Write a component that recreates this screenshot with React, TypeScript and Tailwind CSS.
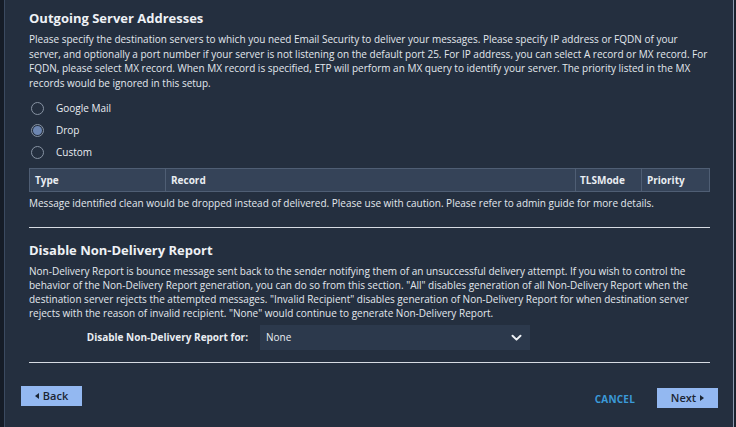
import React, { useState } from "react";

const font = { fontFamily: '"Open Sans", "Noto Sans", sans-serif' };

function Radio({ label, checked, onSelect }: { label: string; checked: boolean; onSelect: () => void }) {
  return (
    <label className="flex h-[22px] cursor-pointer items-center" onClick={onSelect}>
      <span className="ml-[1px] flex h-[13px] w-[13px] items-center justify-center rounded-full border border-[#8793a3]">
        {checked && <span className="h-[9px] w-[9px] rounded-full bg-[#6d86b1]" />}
      </span>
      <span className="ml-[12px] text-[10px] text-[#e9edf2]">{label}</span>
    </label>
  );
}

export default function App() {
  const [mode, setMode] = useState("drop");
  return (
    <div style={font} className="flex h-[427px] w-[736px] bg-[#242f3f] text-[#e9edf2]">
      <div className="w-[4px] bg-[#151c27]" />
      <div className="w-[1px] bg-[#3b4a60]" />
      <div className="flex flex-1 flex-col">
        <div className="pl-[24px] pr-[23px]">
          <h2 className="pt-[8px] text-[13px] font-bold leading-[20px] text-[#eef1f5]">Outgoing Server Addresses</h2>
          <p className="mt-[4px] whitespace-nowrap text-[10px] leading-[14.5px] text-[#e3e8ee]">
            Please specify the destination servers to which you need Email Security to deliver your messages. Please specify IP address or FQDN of your
            <br />
            server, and optionally a port number if your server is not listening on the default port 25. For IP address, you can select A record or MX record. For
            <br />
            FQDN, please select MX record. When MX record is specified, ETP will perform an MX query to identify your server. The priority listed in the MX
            <br />
            records would be ignored in this setup.
          </p>
          <div className="mt-[7px] flex flex-col pl-[1px]">
            <Radio label="Google Mail" checked={mode === "gmail"} onSelect={() => setMode("gmail")} />
            <Radio label="Drop" checked={mode === "drop"} onSelect={() => setMode("drop")} />
            <Radio label="Custom" checked={mode === "custom"} onSelect={() => setMode("custom")} />
          </div>
          <div className="mt-[5px] grid h-[24px] grid-cols-[136px_410px_66px_1fr] border border-[#4f5e74] bg-[#354358] text-[10px] font-bold text-[#e9edf2]">
            <div className="flex items-center border-r border-[#4f5e74] pl-[5px]">Type</div>
            <div className="flex items-center border-r border-[#4f5e74] pl-[5px]">Record</div>
            <div className="flex items-center border-r border-[#4f5e74] pl-[4px]">TLSMode</div>
            <div className="flex items-center pl-[5px]">Priority</div>
          </div>
          <p className="mt-[4px] whitespace-nowrap text-[10px] leading-[14px] text-[#e3e8ee]">
            Message identified clean would be dropped instead of delivered. Please use with caution. Please refer to admin guide for more details.
          </p>
          <div className="mt-[17px] h-[1px] bg-[#d6dbe2]" />
          <h2 className="mt-[12px] text-[13px] font-bold leading-[20px] text-[#eef1f5]">Disable Non-Delivery Report</h2>
          <p className="mt-[4px] whitespace-nowrap text-[10px] leading-[14px] text-[#e3e8ee]">
            Non-Delivery Report is bounce message sent back to the sender notifying them of an unsuccessful delivery attempt. If you wish to control the
            <br />
            behavior of the Non-Delivery Report generation, you can do so from this section. "All" disables generation of all Non-Delivery Report when the
            <br />
            destination server rejects the attempted messages. "Invalid Recipient" disables generation of Non-Delivery Report for when destination server
            <br />
            rejects with the reason of invalid recipient. "None" would continue to generate Non-Delivery Report.
          </p>
          <div className="mt-[5px] flex h-[25px] items-center">
            <span className="w-[231px] pr-[12px] text-right text-[10px] font-bold text-[#e9edf2]">Disable Non-Delivery Report for:</span>
            <div className="flex h-[25px] w-[270px] items-center justify-between bg-[#2c394c] pl-[6px] pr-[8px] text-[10px] text-[#e9edf2]">
              <span>None</span>
              <svg width="11" height="8" viewBox="0 0 11 8" fill="none">
                <path d="M1.5 1.8 L5.5 5.6 L9.5 1.8" stroke="#eef1f5" strokeWidth="2" strokeLinecap="round" strokeLinejoin="round" />
              </svg>
            </div>
          </div>
          <div className="mt-[12px] h-[1px] bg-[#d6dbe2]" />
        </div>
        <div className="mt-[23px] flex items-start pl-[16px] pr-[15px]">
          <button className="flex h-[20px] w-[61px] items-center justify-center gap-[4px] bg-[#93b8f1] text-[11px] font-semibold text-[#1b2533]">
            <svg width="4" height="6" viewBox="0 0 4 6"><path d="M4 0 L0 3 L4 6 Z" fill="#1b2533" /></svg>
            Back
          </button>
          <div className="flex-1" />
          <button className="mt-[6px] mr-[22px] text-[10px] font-bold tracking-[0.2px] text-[#3b9ad8]">CANCEL</button>
          <button className="mt-[2px] flex h-[20px] w-[61px] items-center justify-center gap-[4px] bg-[#93b8f1] text-[11px] font-semibold text-[#1b2533]">
            Next
            <svg width="4" height="6" viewBox="0 0 4 6"><path d="M0 0 L4 3 L0 6 Z" fill="#1b2533" /></svg>
          </button>
        </div>
      </div>
      <div className="w-[1px] bg-[#8c9bb0]" />
      <div className="w-[2px] bg-[#1a222e]" />
    </div>
  );
}
